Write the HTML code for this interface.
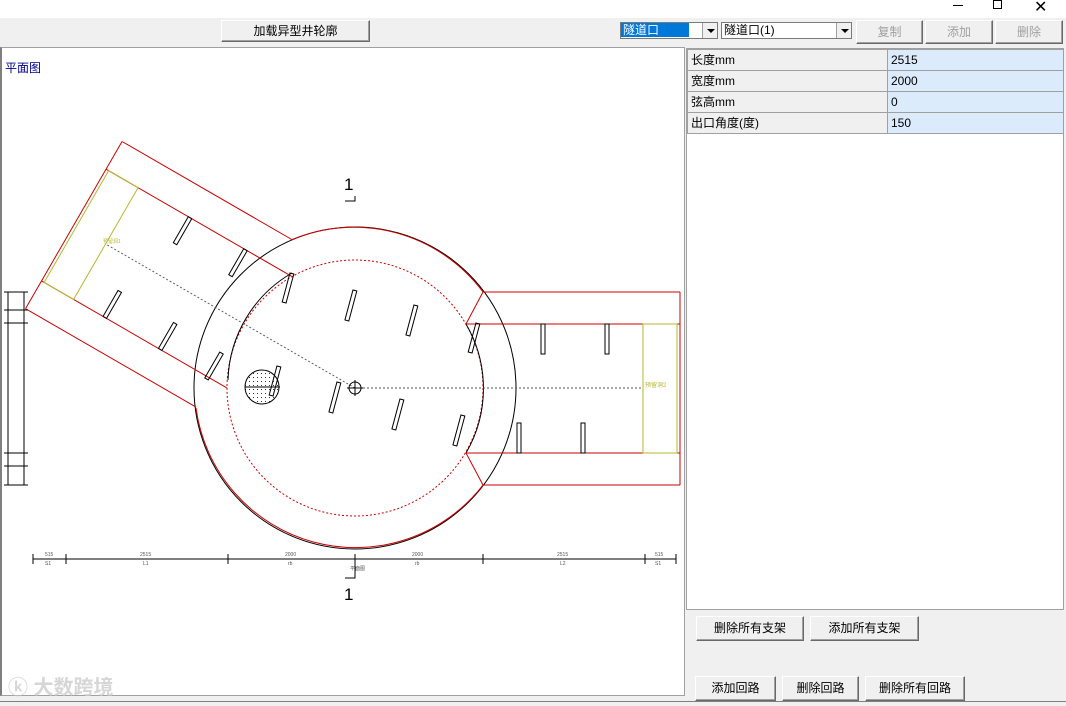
<!DOCTYPE html>
<html><head><meta charset="utf-8"><style>
*{margin:0;padding:0;box-sizing:border-box}
body{width:1066px;height:706px;background:#f0f0f0;font-family:"Liberation Sans","Noto Sans CJK SC",sans-serif;font-size:12px;position:relative;overflow:hidden;color:#000}
.abs{position:absolute}
.btn{position:absolute;background:#f0f0f0;border:1px solid;border-color:#fff #696969 #696969 #fff;box-shadow:inset -1px -1px 0 #a0a0a0;text-align:center;font-size:12px}
.dis{color:#a0a0a0}
.combo{position:absolute;background:#fff;border:1px solid #7a7a7a;height:17px;font-size:12px;line-height:15px}
.arr{position:absolute;right:0;top:0;width:15px;height:15px;background:#f0f0f0;border-left:1px solid #a0a0a0}
.arr:after{content:"";position:absolute;left:4px;top:6px;border:4px solid transparent;border-top:4px solid #000}
table{border-collapse:collapse;position:absolute;left:687px;top:49px;font-size:12px}
td{border:1px solid #a0a0a0;height:21px;padding-left:3px;line-height:20px}
td.k{background:#f0f0f0;width:200px}
td.v{background:#dcebfb;width:176px}
</style></head><body>
<div class="abs" style="left:0;top:0;width:1066px;height:18px;background:#fff"></div>
<div class="abs" style="left:1034px;top:-3px;font-size:16px">✕</div>
<div class="abs" style="left:993px;top:0px;width:9px;height:9px;border:1px solid #000"></div>
<div class="abs" style="left:953px;top:5px;width:10px;height:1px;background:#000"></div>
<div class="abs" style="left:0;top:18px;width:1066px;height:28px;background:#f0f0f0"></div>
<div class="btn" style="left:221px;top:20px;width:149px;height:22px;line-height:20px">加载异型井轮廓</div>
<div class="combo" style="left:620px;top:22px;width:98px"><span style="background:#0078d7;color:#fff;padding:0 30px 0 2px">隧道口</span><div class="arr"></div></div>
<div class="combo" style="left:721px;top:22px;width:131px"><span style="padding-left:2px">隧道口(1)</span><div class="arr"></div></div>
<div class="btn dis" style="left:856px;top:20px;width:67px;height:24px;line-height:22px">复制</div>
<div class="btn dis" style="left:925px;top:20px;width:68px;height:24px;line-height:22px">添加</div>
<div class="btn dis" style="left:995px;top:20px;width:68px;height:24px;line-height:22px">删除</div>

<div class="abs" style="left:0;top:47px;width:685px;height:649px;background:#fff;border:1px solid #a0a0a0;border-left:2px solid #808080"></div>
<div class="abs" style="left:5px;top:59px;color:#00008b;font-size:12px">平面图</div>
<svg class="abs" style="left:0;top:0" width="686" height="700" viewBox="0 0 686 700">
<g fill="none" stroke-width="1">
<circle cx="355" cy="388" r="161" stroke="#000"/>
<circle cx="355" cy="388" r="128" stroke="#c00" stroke-dasharray="2,2"/>
<path d="M291 240 A161 161 0 0 1 483 292" stroke="#c00"/>
<path d="M483 485 A161 161 0 0 1 196 408" stroke="#c00"/>
<path d="M292 273 A128 128 0 0 0 228 380" stroke="#000"/>
<path d="M466 324 A128 128 0 0 1 466 453" stroke="#000"/>
<g id="tun">
<path d="M483 292 H680 M466 324 H680 M466 453 H680 M483 485 H680 M680 292 V485 M483 292 L466 324 M466 453 L483 485" stroke="#c00"/>
<path d="M643 324 V453 H677 V324 Z" stroke="#b5b82e"/>
<path d="M355 388 H643" stroke="#555" stroke-dasharray="2,2"/>
<g stroke="#000"><rect x="541" y="324" width="4" height="30"/><rect x="605" y="324" width="4" height="30"/><rect x="517" y="423" width="4" height="30"/><rect x="581" y="423" width="4" height="30"/></g>
<text x="645" y="387" font-size="6" fill="#b5b82e" stroke="none">预留洞2</text>
</g>
<g transform="rotate(210 355 388)"><path d="M483 292 H680 M466 324 H680 M466 453 H680 M483 485 H680 M680 292 V485" stroke="#c00"/><path d="M643 324 V453 H677 V324 Z" stroke="#b5b82e"/><path d="M355 388 H643" stroke="#555" stroke-dasharray="2,2"/>
<g stroke="#000"><rect x="541" y="324" width="4" height="30"/><rect x="605" y="324" width="4" height="30"/><rect x="517" y="423" width="4" height="30"/><rect x="581" y="423" width="4" height="30"/></g></g>
<g stroke="#000">
<rect x="349" y="290" width="4" height="31" transform="rotate(15 351 305)"/>
<rect x="410" y="305" width="4" height="31" transform="rotate(15 412 320)"/>
<rect x="472" y="323" width="4" height="30" transform="rotate(15 474 338)"/>
<rect x="286" y="273" width="4" height="30" transform="rotate(15 288 288)"/>
<rect x="333" y="382" width="4" height="31" transform="rotate(15 335 397)"/>
<rect x="396" y="399" width="4" height="31" transform="rotate(15 398 414)"/>
<rect x="457" y="415" width="4" height="31" transform="rotate(15 459 430)"/>
<rect x="212" y="351" width="4" height="30" transform="rotate(30 214 366)"/>
<rect x="273" y="366" width="4" height="30" transform="rotate(15 275 381)"/>
<circle cx="262" cy="387" r="17" fill="url(#dots)"/>
<path d="M245 387 H280"/>
<circle cx="355" cy="388" r="6"/><path d="M347 388 H363 M355 380 V396"/>
<path d="M33 559 H676 M33 554 V564 M66 554 V564 M228 554 V564 M355 554 V564 M483 554 V564 M645 554 V564 M676 554 V564"/>
<path d="M345 201 H355 V196 M345 578 H355 V570 M355 559 V570"/>
<path d="M8 292 V485 M24 292 V485 M4 292 H28 M4 310 H28 M4 323 H28 M4 453 H28 M4 466 H28 M4 485 H28"/>
</g>
</g>
<defs><pattern id="dots" width="4" height="4" patternUnits="userSpaceOnUse"><rect x="1" y="1" width="1" height="1" fill="#333"/></pattern></defs>
<g font-size="5" fill="#555" font-family="Liberation Sans">
<text x="45" y="556">515</text><text x="140" y="556">2515</text><text x="285" y="556">2000</text><text x="412" y="556">2000</text><text x="557" y="556">2515</text><text x="655" y="556">515</text>
<text x="45" y="565">S1</text><text x="143" y="565">L1</text><text x="288" y="565">rb</text><text x="415" y="565">rb</text><text x="560" y="565">L2</text><text x="655" y="565">S1</text>
<text x="350" y="570">平面图</text>
<text x="103" y="243" fill="#b5b82e">预留洞1</text>
</g>
<text x="344" y="190" font-size="17" font-family="Liberation Sans">1</text>
<text x="344" y="600" font-size="17" font-family="Liberation Sans">1</text>
</svg>
<div class="abs" style="left:8px;top:671px;color:#ccc;font-size:20px;font-weight:bold;opacity:.8">ⓚ 大数跨境</div>

<div class="abs" style="left:686px;top:48px;width:378px;height:562px;background:#fff;border:1px solid #a0a0a0"></div>
<table>
<tr><td class="k">长度mm</td><td class="v">2515</td></tr>
<tr><td class="k">宽度mm</td><td class="v">2000</td></tr>
<tr><td class="k">弦高mm</td><td class="v">0</td></tr>
<tr><td class="k">出口角度(度)</td><td class="v">150</td></tr>
</table>
<div class="btn" style="left:696px;top:616px;width:108px;height:25px;line-height:23px">删除所有支架</div>
<div class="btn" style="left:810px;top:616px;width:109px;height:25px;line-height:23px">添加所有支架</div>
<div class="btn" style="left:695px;top:676px;width:81px;height:25px;line-height:23px">添加回路</div>
<div class="btn" style="left:782px;top:676px;width:77px;height:25px;line-height:23px">删除回路</div>
<div class="btn" style="left:865px;top:676px;width:100px;height:25px;line-height:23px">删除所有回路</div>
<div class="abs" style="left:0;top:701px;width:1066px;height:5px;background:#f0f0f0;border-top:1px solid #808080"></div>
</body></html>
